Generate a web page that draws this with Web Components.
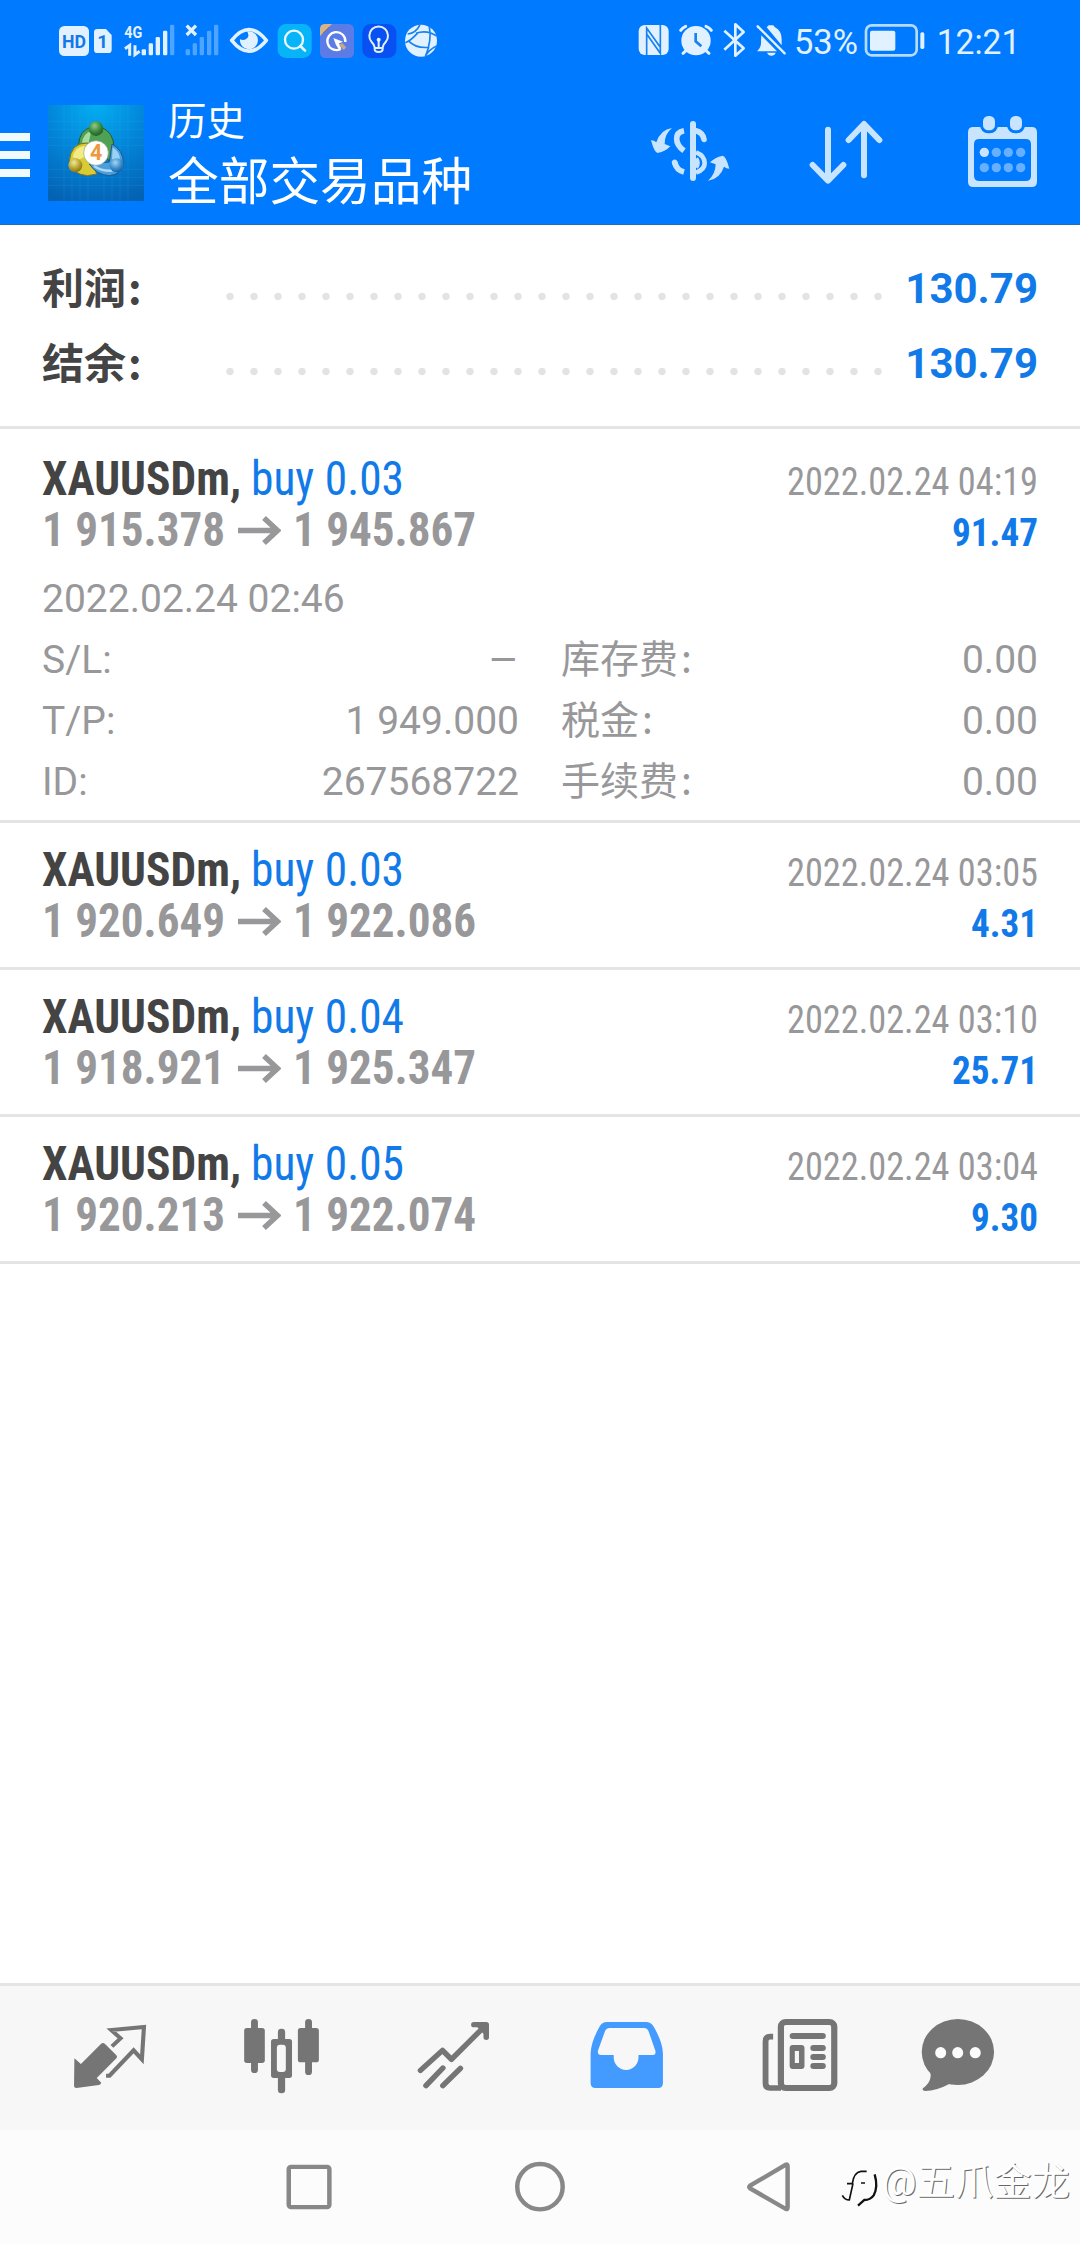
<!DOCTYPE html>
<html lang="zh-CN">
<head>
<meta charset="utf-8">
<title>历史</title>
<style>
html,body{margin:0;background:#fff}
body{font-family:Roboto,"Noto Sans CJK SC",sans-serif;color:#444}
</style>
</head>
<body>
<history-app></history-app>
<script>
const define = (name, html, setup) => {
  const tpl = document.createElement('template');
  tpl.innerHTML = html;
  customElements.define(name, class extends HTMLElement {
    constructor() {
      super();
      this.attachShadow({mode: 'open'}).append(tpl.content.cloneNode(true));
    }
    connectedCallback() { if (setup) setup(this, this.shadowRoot); }
  });
};

/* Text squeezed or stretched horizontally to a fixed advance width */
define('fit-text', `<style>
:host{display:inline-block;white-space:nowrap}
span{display:inline-block;transform-origin:0 50%;white-space:pre}
</style><span></span>`, (el, root) => {
  const s = root.querySelector('span');
  s.textContent = el.getAttribute('text');
  const w = +el.getAttribute('w');
  const n = s.getBoundingClientRect().width;
  el.style.width = w + 'px';
  if (n) {
    s.style.transform = `scaleX(${w / n})`;
    s.style.marginRight = (w - n) + 'px';
  }
});

define('status-bar', `
<style>
:host{display:flex;height:80px;padding:10px 40px 0;box-sizing:border-box;justify-content:space-between}
svg{display:block;height:60px}
text{font-family:Roboto,sans-serif}
</style>
<svg width="410" viewBox="0 0 1230 180">
  <rect x="57" y="48" width="90" height="90" rx="16" fill="#e2f1ff"/>
  <text x="66" y="115" font-size="56" font-weight="700" fill="#1478e8" textLength="72" lengthAdjust="spacingAndGlyphs">HD</text>
  <path d="M172 57H198L215 75V119Q215 129 205 129H172Q162 129 162 119V67Q162 57 172 57Z" fill="#e2f1ff"/>
  <text x="172" y="114" font-size="56" font-weight="700" fill="#1478e8">1</text>
  <text x="253" y="84" font-size="52" font-weight="700" fill="#e2f1ff" textLength="54" lengthAdjust="spacingAndGlyphs">4G</text>
  <g fill="none" stroke="#e2f1ff" stroke-width="9"><path d="M255 116L269 106V137M285 106V134L299 124"/></g>
  <g fill="#e2f1ff"><rect x="305" y="118" width="13" height="18" rx="3"/><rect x="326" y="100" width="13" height="36" rx="4"/><rect x="347" y="81" width="13" height="55" rx="4"/><rect x="369" y="62" width="13" height="74" rx="4"/></g>
  <rect x="390" y="44" width="13" height="92" rx="4" fill="#4da5ff"/>
  <path d="M440 47L468 75M468 47L440 75" stroke="#e2f1ff" stroke-width="10"/>
  <g fill="#4da5ff"><rect x="437" y="118" width="13" height="18" rx="3"/><rect x="458" y="100" width="13" height="36" rx="4"/><rect x="479" y="81" width="13" height="55" rx="4"/><rect x="501" y="62" width="13" height="74" rx="4"/><rect x="522" y="44" width="13" height="92" rx="4"/></g>
  <path d="M575 91Q627 26 679 91Q627 156 575 91Z" fill="none" stroke="#e2f1ff" stroke-width="11" stroke-linejoin="round"/>
  <path d="M627 64A27 27 0 1 1 600 88Q613 94 622 84Q629 76 621 64Z" fill="#e2f1ff"/>
  <rect x="713" y="42" width="102" height="102" rx="25" fill="#08b4f8"/>
  <circle cx="762" cy="89" r="27" fill="none" stroke="#e8f8ff" stroke-width="7"/><path d="M781 108L795 122" stroke="#e8f8ff" stroke-width="8" stroke-linecap="round"/>
  <rect x="840" y="42" width="102" height="102" rx="16" fill="#5b7be6"/>
  <path d="M840 78V58Q840 42 856 42H876Z" fill="#d6b489"/><path d="M849 70L868 51" stroke="#8c6a55" stroke-width="3"/>
  <path d="M902 117A27 27 0 1 1 916 96" fill="none" stroke="#fff" stroke-width="7"/>
  <path d="M880 84L909 95L897 100L904 116L896 117L888 105Z" fill="#fff"/><path d="M902 102L915 116" stroke="#c5a789" stroke-width="11"/>
  <rect x="967" y="42" width="102" height="102" rx="25" fill="#0850f2"/>
  <path d="M1004 112Q1003 104 995 96A28 28 0 1 1 1037 96Q1029 104 1028 112V118Q1028 126 1016 126Q1004 126 1004 118Z" fill="none" stroke="#e2f1ff" stroke-width="6"/>
  <path d="M1004 114H1028M1016 112V92" stroke="#e2f1ff" stroke-width="6"/><circle cx="1016" cy="89" r="6" fill="#e2f1ff"/>
  <circle cx="1143" cy="92" r="48" fill="#e2f1ff"/>
  <path d="M1103 72Q1128 70 1140 44M1128 70Q1160 58 1190 78M1096 98Q1112 92 1132 70M1105 92Q1126 116 1168 112M1168 50Q1176 92 1156 140M1156 140Q1164 120 1190 108" fill="none" stroke="#1681f2" stroke-width="5"/>
</svg>
<svg width="420" viewBox="0 0 1260 180">
  <rect x="56" y="45" width="90" height="90" rx="18" fill="#e2f1ff"/>
  <path d="M80 135V54L121 112V70M80 72L121 130V45" fill="none" stroke="#1681f2" stroke-width="5"/>
  <circle cx="228" cy="92" r="44" fill="#e2f1ff"/>
  <path d="M182 61Q187 53 197 49M258 49Q269 53 274 61M198 122L189 130M258 122L267 130" stroke="#e2f1ff" stroke-width="9" stroke-linecap="round" fill="none"/>
  <path d="M227 69V94L244 109" fill="none" stroke="#1681f2" stroke-width="8"/>
  <path d="M313 62L371 115L346 137V43L371 66L313 119" fill="none" stroke="#e2f1ff" stroke-width="8" stroke-linejoin="round"/>
  <path d="M440 52Q445 48 446 46H460Q463 51 465 52Q485 62 485 88V106ZM424 76L471 124H411Q425 112 423 92ZM441 128H467Q464 137 454 137Q445 137 441 128Z" fill="#e2f1ff"/>
  <path d="M413 49L494 130" stroke="#e2f1ff" stroke-width="7" stroke-linecap="round"/>
  <text x="522" y="132" font-size="104" fill="#e2f1ff" textLength="192" lengthAdjust="spacingAndGlyphs">53%</text>
  <rect x="738" y="46" width="152" height="90" rx="17" fill="none" stroke="#b5dbff" stroke-width="8"/>
  <rect x="750" y="62" width="76" height="60" rx="6" fill="#e2f1ff"/><rect x="901" y="67" width="12" height="50" rx="5" fill="#e2f1ff"/>
  <text x="950" y="132" font-size="104" fill="#e2f1ff" textLength="251" lengthAdjust="spacingAndGlyphs">12:21</text>
</svg>`);

define('app-bar', `
<style>
:host{display:flex;height:145px;box-sizing:border-box;border-bottom:1px solid #1d70b8;color:#fff;align-items:center}
.menu{width:30px;display:grid;gap:10px;margin-top:6px}
.menu i{height:8px;background:#f0faff}
.logo{width:96px;height:96px;margin:2px 24px 0 18px;display:block}
.t{flex:1;line-height:61px;white-space:nowrap;margin-top:1px}
.a{font-size:38.500px;line-height:60px}.b{font-size:50.700px}
.actions{display:flex}
.actions svg{display:block;width:156px;height:144px}
text{font-family:Roboto,sans-serif}
</style>
<div class="menu"><i></i><i></i><i></i></div>
<svg class="logo" viewBox="12 15 288 288">
  <defs>
    <radialGradient id="bg" cx=".5" cy="0" r="1.05"><stop offset="0" stop-color="#03aef2"/><stop offset=".5" stop-color="#0384d8"/><stop offset="1" stop-color="#0462b4"/></radialGradient>
    <radialGradient id="gr" cx=".4" cy=".3" r=".7"><stop offset="0" stop-color="#8fca8c"/><stop offset=".6" stop-color="#3b8a3a"/><stop offset="1" stop-color="#225f2a"/></radialGradient>
    <radialGradient id="ye" cx=".4" cy=".3" r=".7"><stop offset="0" stop-color="#eee9a0"/><stop offset=".6" stop-color="#b8a42c"/><stop offset="1" stop-color="#857420"/></radialGradient>
    <radialGradient id="bl" cx=".4" cy=".3" r=".7"><stop offset="0" stop-color="#a5d5f2"/><stop offset=".6" stop-color="#3d8fd0"/><stop offset="1" stop-color="#1c5f9f"/></radialGradient>
  </defs>
  <path fill="url(#bg)" d="M12 15h288v288H12z"/>
  <path d="M60 15V303M84 15V303M108 15V303M132 15V303M180 15V303M204 15V303M228 15V303M252 15V303M12 64H300M12 88H300M12 112H300M12 136H300M12 208H300M12 232H300M12 256H300" stroke="#35b8ee" stroke-opacity=".25" stroke-width="2"/>
  <g stroke-width="3">
  <path d="M104 134Q106 92 140 82H172Q208 96 210 140Q210 165 194 182L176 150L130 130Z" fill="#4fa155" stroke="#1f5f33"/>
  <path d="M114 128Q118 100 142 92L134 128Z" fill="#a8dba0" stroke="none"/>
  <path d="M130 129Q80 128 76 184Q82 222 130 227L158 222L146 190Z" fill="#d8cb33" stroke="#7d7423"/>
  <path d="M86 172Q92 140 122 138L124 170L106 178Z" fill="#f1ec86" stroke="none"/>
  <path d="M204 132Q238 150 238 190Q232 224 196 227Q156 224 136 192L160 190L196 186Z" fill="#4a9fdc" stroke="#1d5a8f"/>
  <path d="M206 142Q228 156 228 180L204 178Z" fill="#9ad2f4" stroke="none"/>
  <path d="M150 198Q172 214 206 212" fill="none" stroke="#a9dbf7" stroke-width="7"/>
  </g>
  <circle cx="156" cy="86" r="22" fill="url(#gr)"/><circle cx="94" cy="196" r="21" fill="url(#ye)"/><circle cx="218" cy="196" r="21" fill="url(#bl)"/>
  <circle cx="156" cy="159" r="37" fill="#fff" stroke="#93a37d" stroke-width="2"/>
  <text x="156" y="181" font-size="64" font-weight="700" fill="#ee983e" text-anchor="middle">4</text>
</svg>
<div class="t"><div class="a">历史</div><div class="b">全部交易品种</div></div>
<div class="actions">
<svg viewBox="-24 -30 468 432" fill="none" stroke="#c9e4ff" stroke-width="17">
  <path d="M192 122Q170 126 170 146Q170 166 192 182M164 217Q169 240 192 246"/>
  <path d="M228 122Q249 128 252 148" stroke-linecap="round"/><path d="M164 217L166 222" stroke-linecap="round"/>
  <path d="M228 187Q254 197 254 219Q254 239 228 248M228 206Q237 219 228 232" stroke-width="14"/>
  <path d="M219 102V264" stroke-width="18" stroke-linecap="round"/>
  <g fill="#c9e4ff" stroke="none"><path d="M156 114Q133 133 134 162L151 169Q137 184 113 189Q103 188 93 151Q101 150 109 157Q121 119 156 114Z"/><path d="M264 272Q286 254 287 223L270 217Q284 202 308 197Q318 198 328 236Q320 236 312 230Q300 267 264 272Z"/></g>
</svg>
<svg viewBox="444 -30 468 432" fill="none" stroke="#c9e4ff" stroke-width="18" stroke-linecap="round" stroke-linejoin="round">
  <path d="M624 119V270M578 225L624 272L670 225M732 256V104M686 150L732 102L778 150"/>
</svg>
<svg viewBox="912 -30 468 432">
  <path fill="#c9e4ff" fill-rule="evenodd" d="M1060 111H1235Q1251 111 1251 127V275Q1251 291 1235 291H1060Q1044 291 1044 275V127Q1044 111 1060 111ZM1078 147Q1062 147 1062 163V257Q1062 273 1078 273H1217Q1233 273 1233 257V163Q1233 147 1217 147Z"/>
  <g fill="#c9e4ff" stroke="#007aff" stroke-width="9"><rect x="1084.500" y="73.500" width="45" height="52" rx="20"/><rect x="1165.500" y="73.500" width="45" height="52" rx="20"/></g>
  <g fill="#66b0ff"><circle cx="1129" cy="187" r="14"/><circle cx="1165" cy="187" r="14"/><circle cx="1202" cy="187" r="14"/><circle cx="1093" cy="233" r="14"/><circle cx="1129" cy="233" r="14"/><circle cx="1165" cy="233" r="14"/><circle cx="1202" cy="233" r="14"/></g><circle cx="1093" cy="187" r="14" fill="#c9e4ff"/>
</svg>
</div>`);

define('summary-row', `
<style>
:host{display:flex;height:75px;line-height:75px;font-size:42px;font-weight:700;padding:0 42px}
.l{width:176px;white-space:nowrap;line-height:77px;height:75px}
.d{width:672px;background:radial-gradient(circle at 12px 45.500px,#e3e3e3 3.200px,transparent 4.200px) 0 0/24px 75px repeat-x}
.v{flex:1;text-align:right;color:#117ae8}
.c{font-family:"Noto Sans CJK SC",sans-serif;margin-left:2px;line-height:0}
</style><div class="l"><slot name="label"></slot><span class="c">:</span></div><div class="d"></div><div class="v"><slot></slot></div>`);

define('deal-item', `
<style>
:host{display:block;border-bottom:3px solid #e4e4e4;padding:21px 42px}
:host([open]){padding:24px 42px 7px}
.row{display:flex;height:51px;line-height:51px;font-size:48px;align-items:baseline;justify-content:space-between;font-family:"Roboto Condensed",Roboto,sans-serif;font-stretch:75%}
.g{display:flex;align-items:baseline}
b{font-weight:700}
.sym{color:#444;margin-right:10px}.op{color:#117ae8}
.pr{color:#98989a;font-weight:700}
.dt{font-size:39px;color:#98989a}.pl{font-size:39px;color:#117ae8;font-weight:700}
svg{width:43px;height:29px;margin:0 12px 0 13px;transform:translateY(-1px)}
</style>
<div class="row"><div class="g"><b class="sym"></b><span class="op"></span></div><span class="dt"></span></div>
<div class="row"><div class="g pr"><span class="p1"></span><svg viewBox="0 0 43 29" fill="none" stroke="#98989a" stroke-width="5.500"><path d="M0 14.500H39M26 2L39.500 14.500L26 27"/></svg><span class="p2"></span></div><span class="pl"></span></div>
<slot></slot>`, (el, root) => {
  const put = (sel, text, w) => {
    const f = document.createElement('fit-text');
    f.setAttribute('text', text); f.setAttribute('w', w);
    root.querySelector(sel).replaceChildren(f);
  };
  const a = n => el.getAttribute(n);
  put('.sym', 'XAUUSDm,', 199);
  put('.op', a('op'), 153);
  put('.dt', a('date'), 251);
  put('.p1', a('from'), 183);
  put('.p2', a('to'), 183);
  put('.pl', a('profit'), a('profit').length > 4 ? 86 : 67);
});

define('deal-details', `
<style>
:host{display:grid;grid-template-columns:477px 477px;justify-content:space-between;font-size:39px;line-height:61px;color:#98989a;padding-top:14px}
::slotted(:first-child){grid-column:1/3}
</style><slot></slot>`);

define('detail-pair', `
<style>
:host{display:flex;justify-content:space-between;height:61px}
.c{display:none;font-family:"Noto Sans CJK SC",sans-serif;margin-left:3px;line-height:0}
:host([wide]) .c{display:inline}
</style><span><slot name="k"></slot><span class="c">:</span></span><span><slot></slot></span>`);

define('tab-bar', `
<style>
:host{display:flex;height:147px;box-sizing:border-box;border-top:3px solid #e4e4e4;background:#f7f7f7}
svg{display:block;width:180px;height:144px;fill:#757575}
.s{fill:none;stroke:#757575}
</style>
<svg viewBox="0 48 522.700 432" preserveAspectRatio="none">
  <path d="M216 265L235 282L293 222Q299 216 305 222L338 256Q342 261 338 265L281 324L294 338Q293 344 287 345L222 354Q215 354 215 348Z"/>
  <path class="s" stroke-width="12" d="M325 229L350 205L323 180L418 171L412 268L388 241L318 317H308"/>
</svg>
<svg viewBox="522.700 48 522.700 432" preserveAspectRatio="none">
  <rect x="709" y="174" width="60" height="105" rx="8"/><rect x="865" y="174" width="61" height="103" rx="8"/>
  <rect x="729" y="147" width="20" height="162" rx="10"/><rect x="886" y="147" width="20" height="168" rx="10"/>
  <rect x="807" y="176" width="21" height="45" rx="10"/><rect x="807" y="310" width="21" height="60" rx="10"/>
  <rect x="787" y="207" width="61" height="117" rx="8"/><rect x="804" y="224" width="26" height="82" rx="9" fill="#f7f7f7"/>
</svg>
<svg viewBox="1045.400 48 522.700 432" preserveAspectRatio="none">
  <path class="s" stroke-width="16" stroke-linecap="round" stroke-linejoin="round" d="M1221 301L1285 241L1311 268L1408 168M1376 164H1412V202M1237 347L1286 294M1286 347L1337 295"/><path d="M1385 170H1410V198Z"/>
</svg>
<svg viewBox="0 48 522.700 432" preserveAspectRatio="none">
  <path fill="#439bff" fill-rule="evenodd" d="M194 156H308Q321 156 329 168Q356 215 357 250V340Q357 354 343 354H161Q147 354 147 340V250Q148 215 174 168Q181 156 194 156ZM202 174Q193 174 189 183L169 240Q165 255 178 255H214V262A36 38 0 0 0 286 262V255H325Q338 255 335 242L315 183Q311 174 302 174Z"/>
</svg>
<svg viewBox="522.700 48 522.700 432" preserveAspectRatio="none">
  <rect class="s" x="699.500" y="156" width="155" height="198" rx="14" stroke-width="18"/>
  <path class="s" stroke-width="17" d="M677 200H668Q655 200 655 214V340Q655 354 668 354H700"/>
  <rect x="725" y="189" width="105" height="18" rx="9"/><rect x="725" y="225" width="43" height="72" rx="9"/><rect x="740" y="243" width="12" height="36" fill="#f7f7f7"/>
  <rect x="785" y="225" width="45" height="18" rx="9"/><rect x="785" y="252" width="45" height="18" rx="9"/><rect x="785" y="279" width="45" height="18" rx="9"/>
</svg>
<svg viewBox="1045.400 48 522.700 432" preserveAspectRatio="none">
  <ellipse cx="1213.500" cy="246" rx="105" ry="99"/><path d="M1124 294Q1137 308 1134 322Q1132 340 1112 355Q1108 361 1118 363Q1152 362 1190 341Z"/>
  <g fill="#fcfcfc"><ellipse cx="1163.500" cy="248" rx="16" ry="17"/><ellipse cx="1213" cy="248" rx="16" ry="17"/><ellipse cx="1264" cy="248" rx="16" ry="17"/></g>
</svg>`);

define('system-nav', `
<style>
:host{display:flex;height:114px;background:#fcfcfc;position:relative}
svg.n{display:block;width:360px;height:114px;fill:none;stroke:#888;stroke-width:13}
.mark{position:absolute;right:10px;top:22px;display:flex;align-items:center;font-size:38.600px;line-height:60px;color:#fff;text-shadow:1px 1px 0 #666;white-space:nowrap}
.mark svg{width:42px;height:46px;margin:12px 0 0 0}
</style>
<svg class="n" viewBox="0 480 1045.400 342" preserveAspectRatio="none"><rect x="838.500" y="590.500" width="118" height="121" rx="7"/></svg>
<svg class="n" viewBox="1045.400 480 1045.400 342" preserveAspectRatio="none"><ellipse cx="1568" cy="650" rx="66" ry="68"/></svg>
<svg class="n" viewBox="522.700 480 1045.400 342" preserveAspectRatio="none"><path stroke-linejoin="round" d="M610 647L714 584Q719 582 719 589V712Q719 719 714 717L610 655Q605 651 610 647Z"/></svg>
<div class="mark"><svg viewBox="28 32 126 138" fill="none" stroke="#111" stroke-width="5"><path d="M35 123Q42 137 56 137L67 87M49 88H65Q69 54 91 51H108M91 86H103"/><path stroke-width="7" d="M132 60Q143 98 129 123Q119 137 101 137L82 154"/></svg><fit-text text="@五爪金龙" w="188"></fit-text></div>`);

define('history-app', `
<style>
:host{display:flex;flex-direction:column;height:2244px;width:1080px;overflow:hidden;background:#fff}
header{background:#007aff}
main{flex:1}
.sum{padding:26px 0 25px;border-bottom:3px solid #e4e4e4}
</style>
<header><status-bar></status-bar><app-bar></app-bar></header>
<main>
<div class="sum">
<summary-row><span slot="label">利润</span>130.79</summary-row>
<summary-row><span slot="label">结余</span>130.79</summary-row>
</div>
<deal-item open op="buy 0.03" date="2022.02.24 04:19" from="1 915.378" to="1 945.867" profit="91.47">
<deal-details><span>2022.02.24 02:46</span>
<detail-pair><span slot="k">S/L:</span><fit-text text="–" w="31"></fit-text></detail-pair><detail-pair wide><span slot="k">库存费</span>0.00</detail-pair>
<detail-pair><span slot="k">T/P:</span>1 949.000</detail-pair><detail-pair wide><span slot="k">税金</span>0.00</detail-pair>
<detail-pair><span slot="k">ID:</span>267568722</detail-pair><detail-pair wide><span slot="k">手续费</span>0.00</detail-pair>
</deal-details></deal-item>
<deal-item op="buy 0.03" date="2022.02.24 03:05" from="1 920.649" to="1 922.086" profit="4.31"></deal-item>
<deal-item op="buy 0.04" date="2022.02.24 03:10" from="1 918.921" to="1 925.347" profit="25.71"></deal-item>
<deal-item op="buy 0.05" date="2022.02.24 03:04" from="1 920.213" to="1 922.074" profit="9.30"></deal-item>
</main>
<tab-bar></tab-bar>
<system-nav></system-nav>`);
</script>
</body>
</html>
